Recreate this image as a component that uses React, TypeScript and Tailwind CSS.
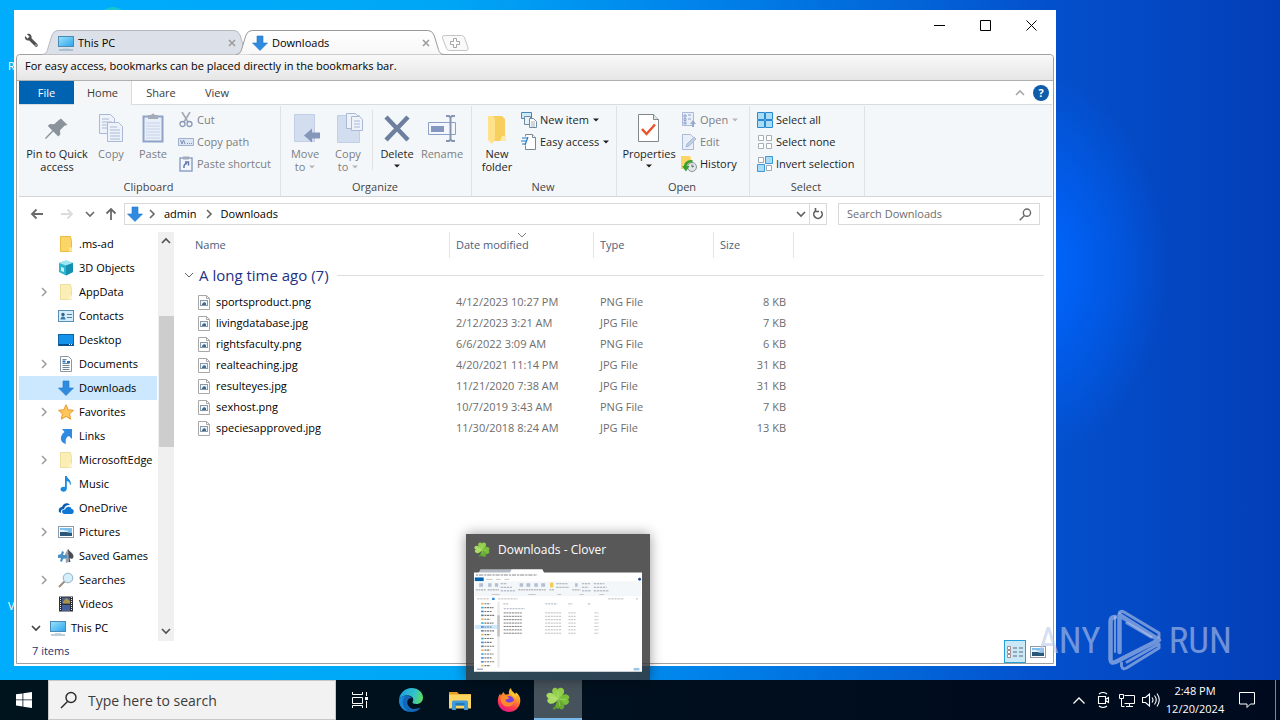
import { useState } from "react"
import type { ReactNode } from "react"
import { clsx } from "clsx"

/* ---------- shared icons ---------- */

function DownArrow({ className }: { className?: string }) {
	return (
		<svg viewBox="0 0 16 16" className={clsx("size-4 shrink-0", className)}>
			<path d="M5 1h6v7h4.5L8 15.5.5 8H5z" fill="#2f8be0" stroke="#1f76c8" strokeWidth=".6" />
		</svg>
	)
}

function Monitor() {
	return (
		<svg viewBox="0 0 16 16" className="size-4 shrink-0">
			<defs>
				<linearGradient id="screen" x1="0" y1="0" x2="1" y2="1">
					<stop offset="0" stopColor="#9be4fb" />
					<stop offset="1" stopColor="#2ba3ec" />
				</linearGradient>
			</defs>
			<rect x=".5" y="1.5" width="15" height="10" fill="url(#screen)" stroke="#4a8ab5" />
			<path d="M1 15h14" stroke="#78a0b4" />
			<path d="M5 13.5h6" stroke="#c4d6df" />
		</svg>
	)
}

function Folder({ pale }: { pale?: boolean }) {
	return (
		<svg viewBox="0 0 16 16" className="size-4 shrink-0">
			<path d="M2.5.5h10l1 5v10h-11z" fill={pale ? "#fbeeb4" : "#fbd667"} stroke={pale ? "#efdf9f" : "#e9bb45"} />
			<path d="M11 11.500h3v4h-3z" fill={pale ? "#fdf4cf" : "#ffe79a"} />
		</svg>
	)
}

function Chevron({ dir, className }: { dir: "up" | "down" | "right"; className?: string }) {
	const d = { up: "M1 7l4-4 4 4", down: "M1 3l4 4 4-4", right: "M3 1l4 4-4 4" }[dir]
	return (
		<svg viewBox="0 0 10 10" className={clsx("size-[10px] shrink-0", className)} fill="none" stroke="currentColor" strokeWidth="1.600">
			<path d={d} />
		</svg>
	)
}

function Caret({ className }: { className?: string }) {
	return (
		<svg viewBox="0 0 6 4" className={clsx("inline-block h-1 w-[6px]", className)}>
			<path d="M0 .5h6L3 3.500z" fill="currentColor" />
		</svg>
	)
}

function Magnifier({ className }: { className?: string }) {
	return (
		<svg viewBox="0 0 18 18" className={className} fill="none" stroke="currentColor">
			<circle cx="11" cy="6.500" r="5" />
			<path d="M7.500 10.500 1 17" />
		</svg>
	)
}

function Picture() {
	return (
		<svg viewBox="0 0 16 16" className="size-4 shrink-0">
			<rect x=".5" y="2.500" width="15" height="11" fill="#fff" stroke="#8f9ba6" />
			<path d="M2 4h12v8H2z" fill="#7dc0ee" />
			<path d="M2 8c4-2 6 1 12 1v3H2z" fill="#2b5878" />
			<path d="M2 6.500c3-2 5 1 8 0v1.500H2z" fill="#e4f3fc" />
		</svg>
	)
}

function Clover({ className }: { className?: string }) {
	return (
		<svg viewBox="0 0 24 24" className={className}>
			<path d="M11.500 12c-.5 4-2 7-5 9.500l2 1.500c3-3 4-6.500 4-11z" fill="#4f9a2c" />
			<path d="M12 12.500C8.500 9.500 5.500 6.500 6.300 3.200 7.100.2 10.600 0 11.800 2.400 13.500-.2 17.900.6 18.100 4 18.200 7.400 14.800 9.800 12 12.500z" fill="#93d04b" />
			<path d="M12.300 12.500C9.500 15.500 6 18 3 16.200.6 14.500 1 12.200 2.600 11.300-.2 10-.4 6.800 2.700 5.900 6.500 5 9.800 9 12.300 12.500z" fill="#a9dd62" />
			<path d="M11.700 12.500c2.800-3.500 5.800-6 9-5 3.100 1 3.200 4 1.300 5.100 2 1.800.7 5.200-2.500 5.300-3.600.100-6-2.900-7.800-5.400z" fill="#79bd3a" />
			<path d="M12 12c3.300 1.800 7 5 6.200 8.300-.8 2.700-4 2.700-4.700.7-2 1.600-4 0-3.700-2.600.300-2.300 1.400-4.700 2.200-6.400z" fill="#66a92f" />
			<path d="M12 12L12 4M12 12L4 10.500M12 12l8 .5M12.500 13l1.500 6" stroke="#c6ea8c" strokeWidth=".7" opacity=".7" />
		</svg>
	)
}

/* ---------- tab strip ---------- */

function Tab({ title, icon, active, onClick }: { title: string; icon: ReactNode; active: boolean; onClick: () => void }) {
	return (
		<div className={clsx("relative h-[25px] w-[208px]", active ? "z-10" : "z-0")}>
			<svg viewBox="0 0 208 25" className="absolute inset-0 size-full" preserveAspectRatio="none">
				<defs>
					<linearGradient id="tabFill" x1="0" y1="0" x2="0" y2="1">
						<stop offset="0" stopColor="#ffffff" />
						<stop offset="1" stopColor="#f7f7f7" />
					</linearGradient>
				</defs>
				<path
					d="M0 24.500C4 24 5 22 6 18L10 5Q12 .5 16 .5H192Q196 .5 198 5L202 18C203 22 204 24 208 24.500"
					fill={active ? "url(#tabFill)" : "#dce0e8"}
					stroke={active ? "#9a9a9a" : "#b4b8bf"}
				/>
			</svg>
			<div className="relative flex h-full items-center pl-4 pr-[13px] pt-px">
				<button onClick={onClick} className="flex min-w-0 flex-1 items-center gap-1 text-left">
					{icon}
					<span>{title}</span>
				</button>
				<button aria-label={`Close ${title}`} className="grid size-[10px] place-items-center text-[#9a9a9a]">
					<svg viewBox="0 0 8 8" className="size-2" stroke="currentColor" strokeWidth="1.500">
						<path d="M1 1l6 6M7 1L1 7" />
					</svg>
				</button>
			</div>
		</div>
	)
}

function TitleBar() {
	const [tab, setTab] = useState("Downloads")
	return (
		<header className="flex h-11 shrink-0 items-start">
			<div className="flex h-full items-end pl-[7px]">
				<button aria-label="Settings" className="mb-[6px] mr-[3px] grid size-4 place-items-center">
					<svg viewBox="0 0 16 16" className="size-[15px]">
						<path d="M6 6l7 7" stroke="#505050" strokeWidth="3.400" strokeLinecap="round" />
						<path d="M3.200 1.200 6 4 4 6 1.200 3.200C.2 6 2.500 8.800 5.800 7.800L8 5.500C8.800 2.500 6 .1 3.200 1.200z" fill="#505050" />
						<circle cx="12.800" cy="12.800" r=".7" fill="#fff" />
					</svg>
				</button>
				<div className="relative z-10 -mb-px flex">
					<Tab title="This PC" icon={<Monitor />} active={tab === "This PC"} onClick={() => setTab("This PC")} />
					<div className="-ml-[14px]">
						<Tab title="Downloads" icon={<DownArrow />} active={tab === "Downloads"} onClick={() => setTab("Downloads")} />
					</div>
				</div>
				<button aria-label="New tab" className="-ml-[3px] mb-[3px] h-4 w-7">
					<svg viewBox="0 0 28 16" fill="#f9f9f9" stroke="#c4c4c4">
						<path d="M4.500.5h16q2 0 3 2l3.500 10q1 3-2 3H8.500q-2 0-3-2L1.500 3q-1-2.500 3-2.500z" />
						<path d="M12.500 3.500h3v3h3v3h-3v3h-3v-3h-3v-3h3z" fill="#fff" stroke="#a5a5a5" />
					</svg>
				</button>
			</div>
			<div className="ml-auto flex text-black">
				{[
					["Minimize", "M0 5.500h11"],
					["Maximize", "M.5.5h10v10H.5z"],
					["Close", "M.5.5l10 10M10.500.5l-10 10"],
				].map(([label, d]) => (
					<button key={label} aria-label={label} className="grid h-[30px] w-[46px] place-items-center">
						<svg viewBox="0 0 11 11" className="size-[11px]" fill="none" stroke="currentColor">
							<path d={d} />
						</svg>
					</button>
				))}
			</div>
		</header>
	)
}

/* ---------- ribbon ---------- */

const bigIcons: Record<string, ReactNode> = {
	pin: <path d="M20 5.500l6.500 6.500-3 .8-4.500 4.500.3 4.200-2 2-5-5-6.800 7-1.500.5.500-1.500 6.800-7-4.500-4.500 2-2 4.300.3 4.500-4z" fill="#8a929b" />,
	copy: (
		<g fill="#eef3fa" stroke="#a9b9d6">
			<path d="M4.500 1.500h11l4 4v15h-15z" />
			<path d="M7 6h7M7 9h10M7 12h10M7 15h10" />
			<path d="M12.500 9.500h11l4 4v15h-15z" />
			<path d="M15 14h7M15 17h10M15 20h10M15 23h10M15 26h10" />
		</g>
	),
	paste: (
		<g>
			<path d="M6.500 3.500h19v25h-19z" fill="#e9eff9" stroke="#8ea3c8" strokeWidth="2" />
			<path d="M11 2h3q2-3 4 0h3v4H11z" fill="#a3abb8" />
			<path d="M9 10h14M9 13h14M9 16h14M9 19h14M9 22h14M9 25h14" stroke="#c4d2ea" />
		</g>
	),
	move: (
		<g>
			<path d="M5.500 1.500h20v27h-20z" fill="#d3ddf0" stroke="#c2cfe8" />
			<path d="M15 22.500l8-7v4h8v6h-8v4z" fill="#8596bb" />
		</g>
	),
	copyTo: (
		<g fill="#eef3fa" stroke="#a9b9d6">
			<path d="M5.500 2.500h22v27h-22z" fill="#d3ddf0" stroke="#c2cfe8" />
			<path d="M14.500.5h9l3 3v12h-12z" />
			<path d="M19.500 3.500h8l3 3v11h-11z" />
			<path d="M22 8h6M22 11h6M22 14h6" />
		</g>
	),
	delete: <path d="M5 4l22 23M27 4L5 27" stroke="#6d7f9f" strokeWidth="4.500" fill="none" />,
	rename: (
		<g fill="none" stroke="#8ba0c6">
			<path d="M2.500 9.500h27v12h-27z" fill="#f3f6fc" />
			<path d="M5 13h13v6H5z" fill="#8397bf" stroke="none" />
			<path d="M20 3h3l1.500 1.500L26 3h3M24.500 4.500v22M20 28h3l1.500-1.500 1.500 1.500h3" strokeWidth="2" stroke="#8796b0" />
		</g>
	),
	folder: (
		<g>
			<path d="M7 3h14l3 3v22H8.500z" fill="#f7cf5e" />
			<path d="M7 3h5l2 3v20l-3 5-4-4z" fill="#ffe28a" />
			<path d="M21 23h4v5h-6z" fill="#ffeaa5" />
		</g>
	),
	properties: (
		<g fill="#fff" stroke="#82878c">
			<path d="M5.500 1.500h15l5 5v22h-20z" />
			<path d="M20.500 1.500v5h5" fill="#dcebe2" />
			<path d="M9 16l4.500 5L22 11.500" fill="none" stroke="#e8532b" strokeWidth="2.500" />
		</g>
	),
}

function BigButton({ icon, label, width, muted, caret }: { icon: string; label: string; width: string; muted?: boolean; caret?: "inline" | "below" }) {
	return (
		<button className={clsx("flex flex-col items-center pt-[7px] text-center leading-[13px]", width, muted ? "text-[#7b7e82]" : "text-[#1e1e1e]")}>
			<svg viewBox="0 0 32 32" className="mb-[2px] size-8">
				{bigIcons[icon]}
			</svg>
			<span className="whitespace-pre">
				{label}
				{caret === "inline" && <Caret className="mb-[2px] ml-1 text-[#b5b8bc]" />}
			</span>
			{caret === "below" && <Caret className="mt-1" />}
		</button>
	)
}

const smallIcons: Record<string, ReactNode> = {
	cut: (
		<g fill="none" stroke="#8a99b5" strokeWidth="1.300">
			<path d="M4 0l6 10M12 0L6 10" stroke="#a3a9b3" strokeWidth="1.600" />
			<circle cx="4.500" cy="12" r="2.500" />
			<circle cx="11.500" cy="12" r="2.500" />
		</g>
	),
	path: (
		<g fill="none" stroke="#9fb0cc">
			<path d="M.5 4.500h15v7H.5z" fill="#dde6f5" />
			<path d="M2.500 6l1.500 4 1.500-4L7 10M9 9.500h1M11 9.500h1M13 9.500h1" stroke="#7f90b0" />
		</g>
	),
	shortcut: (
		<g fill="none">
			<path d="M2 2h12v13H2z" fill="#f3f7fd" stroke="#8ea3c8" strokeWidth="1.500" />
			<path d="M5 .5h6v3H5z" fill="#a3abb8" />
			<path d="M6 12c-.5-3 1-4.500 3-4.500M7 6h3.500v3.500" stroke="#5f78ab" strokeWidth="1.500" />
		</g>
	),
	newItem: (
		<g fill="#fff" stroke="#6f8ba3">
			<path d="M.5.5h10v6H.5z" fill="#cfe8f7" stroke="#4a87b5" />
			<path d="M3.500 4.500h6v8h-6z" fill="#e8f3f9" />
			<path d="M8.500 6.500h4l3 3v6h-7z" />
			<path d="M10 10h4M10 12h4M10 14h4" stroke="#a3aeb8" />
		</g>
	),
	easy: (
		<g fill="#fff" stroke="#7b8791">
			<path d="M4.500 2.500v-2h7l3 3v12h-10v-4" />
			<path d="M11.500.5v3h3" />
			<path d="M1 4h6M0 7h5M1 10h3M7 3L4 11" stroke="#2579c4" strokeWidth="1.200" />
		</g>
	),
	open: (
		<g fill="#e9eff9" stroke="#a9b9d6">
			<path d="M1.500.5h11v13h-11z" />
			<path d="M3 3h2v2H3zM3 6.500h2v2H3zM3 10h2v2H3zM7 3h3M7 7h3" stroke="#8ea3c8" />
			<path d="M7 15h4v-3H9l3-4 3 4h-2v3z" fill="#98a9cb" stroke="none" />
		</g>
	),
	edit: (
		<g fill="#e9eff9" stroke="#a9b9d6">
			<path d="M1.500.5h8l3 3v12h-11z" />
			<path d="M5 13l1-3 7-7 2 2-7 7z" fill="#c0cde6" />
		</g>
	),
	history: (
		<g>
			<path d="M0 0h9l1 2v11H0z" fill="#fbd667" />
			<circle cx="11" cy="11" r="4.500" fill="#e2e6e8" stroke="#8b9297" />
			<path d="M11 8.500V11l2-1" fill="none" stroke="#5d666c" />
			<path d="M4.500 13C3 8 7 4.500 11.500 5.500" fill="none" stroke="#37a033" strokeWidth="2.500" />
			<path d="M1 10l4 5.500L8.500 10z" fill="#37a033" />
		</g>
	),
	all: <path d="M.5.5h7v7h-7zM8.500.5h7v7h-7zM.5 8.500h7v7h-7zM8.500 8.500h7v7h-7z" fill="#a9dcf8" stroke="#2a8ad0" />,
	none: <path d="M1.500 1.500h5v5h-5zM9.500 1.500h5v5h-5zM1.500 9.500h5v5h-5zM9.500 9.500h5v5h-5z" fill="#fff" stroke="#a9aeb3" />,
	invert: (
		<g>
			<path d="M1.500 1.500h5v5h-5zM9.500 9.500h5v5h-5z" fill="#fff" stroke="#9fa8b0" />
			<path d="M8.500.5h7v7h-7zM.5 8.500h7v7h-7z" fill="#a9dcf8" stroke="#3f97d8" />
		</g>
	),
}

function SmallButton({ icon, label, muted, caret }: { icon: string; label: string; muted?: boolean; caret?: boolean }) {
	return (
		<button className={clsx("flex h-[22px] items-center gap-[3px] whitespace-nowrap", muted ? "text-[#7b7e82]" : "text-[#1e1e1e]")}>
			<svg viewBox="0 0 16 16" className="size-4">
				{smallIcons[icon]}
			</svg>
			{label}
			{caret && <Caret className={clsx("ml-px", muted && "text-[#b5b8bc]")} />}
		</button>
	)
}

function Group({ label, width, children }: { label: string; width: string; children: ReactNode }) {
	return (
		<section className={clsx("flex flex-col border-r border-[#e0e3e6]", width)}>
			<div className="flex flex-1">{children}</div>
			<div className="pr-[2px] text-center leading-[18px] text-[#444]">{label}</div>
		</section>
	)
}

function SmallColumn({ children }: { children: ReactNode }) {
	return <div className="flex flex-col items-start pt-[3px]">{children}</div>
}

function Ribbon() {
	return (
		<div>
			<div className="flex h-6 items-stretch border-b border-[#dadbdc] text-[#3b3b3b]">
				<button className="w-[55px] bg-[#0063b1] pt-px text-white">File</button>
				<button className="-mb-px w-[58px] border-r border-[#dadbdc] bg-[#f5f6f7]">Home</button>
				<button className="w-[58px] pt-px">Share</button>
				<button className="w-[54px] pt-px">View</button>
				<button aria-label="Collapse ribbon" className="ml-auto w-6 text-[#a8a8a8]">
					<Chevron dir="up" className="mx-auto" />
				</button>
				<button aria-label="Help" className="ml-px mr-[3px] grid place-items-center">
					<span className="grid size-4 place-items-center rounded-full bg-[#0f5cab] text-[11px] font-bold leading-4 text-white">?</span>
				</button>
			</div>
			<div className="flex h-[92px] border-b border-[#d3d5d7] bg-[#f4f7fa] pt-px">
				<Group label="Clipboard" width="w-[262px]">
					<div className="w-[5px]" />
					<BigButton icon="pin" label={"Pin to Quick\naccess"} width="w-[66px]" />
					<BigButton icon="copy" label="Copy" width="w-[42px]" muted />
					<BigButton icon="paste" label="Paste" width="w-[42px]" muted />
					<div className="w-1" />
					<SmallColumn>
						<SmallButton icon="cut" label="Cut" muted />
						<SmallButton icon="path" label="Copy path" muted />
						<SmallButton icon="shortcut" label="Paste shortcut" muted />
					</SmallColumn>
				</Group>
				<Group label="Organize" width="w-[191px]">
					<div className="w-[2px]" />
					<BigButton icon="move" label={"Move\nto"} width="w-[44px]" muted caret="inline" />
					<BigButton icon="copyTo" label={"Copy\nto"} width="w-[42px]" muted caret="inline" />
					<div className="mx-[3px] mt-1 h-[60px] w-px bg-[#e0e3e6]" />
					<BigButton icon="delete" label="Delete" width="w-[42px]" caret="below" />
					<BigButton icon="rename" label="Rename" width="w-[48px]" muted />
				</Group>
				<Group label="New" width="w-[145px]">
					<div className="w-px" />
					<BigButton icon="folder" label={"New\nfolder"} width="w-[48px]" />
					<SmallColumn>
						<SmallButton icon="newItem" label="New item" caret />
						<SmallButton icon="easy" label="Easy access" caret />
					</SmallColumn>
				</Group>
				<Group label="Open" width="w-[133px]">
					<BigButton icon="properties" label="Properties" width="w-[64px]" caret="below" />
					<SmallColumn>
						<SmallButton icon="open" label="Open" muted caret />
						<SmallButton icon="edit" label="Edit" muted />
						<SmallButton icon="history" label="History" />
					</SmallColumn>
				</Group>
				<Group label="Select" width="w-[115px]">
					<div className="w-[7px]" />
					<SmallColumn>
						<SmallButton icon="all" label="Select all" />
						<SmallButton icon="none" label="Select none" />
						<SmallButton icon="invert" label="Invert selection" />
					</SmallColumn>
				</Group>
			</div>
		</div>
	)
}

/* ---------- address row ---------- */

function Arrow({ d, label, className }: { d: string; label: string; className?: string }) {
	return (
		<button aria-label={label} className={clsx("grid w-6 place-items-center", className)}>
			<svg viewBox="0 0 14 14" className="size-[14px]" fill="none" stroke="currentColor" strokeWidth="1.800">
				<path d={d} />
			</svg>
		</button>
	)
}

function AddressRow() {
	return (
		<div className="flex h-[35px] shrink-0 items-center pb-px pl-[6px] pr-3 text-[#6a6a6a]">
			<Arrow label="Back" d="M13 7H2M6.500 2.500 2 7l4.500 4.500" />
			<Arrow label="Forward" d="M1 7h11M7.500 2.500 12 7l-4.500 4.500" className="ml-[6px] text-[#dcdcdc]" />
			<button aria-label="Recent locations" className="ml-[6px]">
				<Chevron dir="down" className="size-[7px]" />
			</button>
			<Arrow label="Up" d="M7 13V2M2.500 6.500 7 2l4.500 4.500" className="ml-1 mr-px" />
			<nav className="flex h-[22px] flex-1 items-center border border-[#d9d9d9] text-black">
				<DownArrow className="ml-[2px]" />
				<Chevron dir="right" className="ml-1 size-[7px] text-[#666]" />
				<a href="#admin" className="ml-[7px]">
					admin
				</a>
				<Chevron dir="right" className="ml-[7px] size-[7px] text-[#666]" />
				<a href="#downloads" className="ml-[7px]">
					Downloads
				</a>
				<button aria-label="Previous locations" className="ml-auto mr-[3px] text-[#5e5e5e]">
					<Chevron dir="down" />
				</button>
				<button aria-label="Refresh" className="grid h-full w-[17px] place-items-center border-l border-[#d9d9d9] text-[#5e5e5e]">
					<svg viewBox="0 0 12 12" className="size-3" fill="none" stroke="currentColor" strokeWidth="1.600">
						<path d="M3 3.200A4.200 4.200 0 1 0 9 3.200M3.500 0v3.500H7" />
					</svg>
				</button>
			</nav>
			<label className="ml-[11px] flex h-[22px] w-[202px] items-center border border-[#d9d9d9] pl-2 pr-[7px]">
				<input aria-label="Search Downloads" placeholder="Search Downloads" className="min-w-0 flex-1 outline-none placeholder:text-[#6d6d6d]" />
				<Magnifier className="size-[13px] stroke-[2]" />
			</label>
		</div>
	)
}

/* ---------- navigation pane ---------- */

const navIcons: Record<string, ReactNode> = {
	cube: (
		<g>
			<path d="M8 .5l7 2.500v9L8 15.500 1 12V3z" fill="#2eb5cf" />
			<path d="M8 .5l7 2.500-7 2.500L1 3z" fill="#9fe6f2" />
			<path d="M8 5.500L15 3v9l-7 3.500z" fill="#1590b2" />
			<path d="M3 7l3 1v4l-3-1z" fill="#c6f3f9" />
		</g>
	),
	contacts: (
		<g>
			<rect x=".5" y="2.500" width="15" height="11" fill="#d5ecfa" stroke="#5a8fb5" />
			<circle cx="5" cy="6.500" r="1.700" fill="#33658a" />
			<path d="M2.500 11.500c0-4 5-4 5 0z" fill="#3a7aa8" />
			<path d="M9 6.500h5M9 9.500h5" stroke="#4985ad" />
		</g>
	),
	desktop: (
		<g>
			<rect x=".5" y="2.500" width="15" height="11" fill="#1593ea" stroke="#0b63a8" />
			<path d="M1 12h14v1.500H1z" fill="#084a84" />
			<path d="M11 12.500h1M13 12.500h1" stroke="#fff" />
		</g>
	),
	document: (
		<g>
			<path d="M2.500.5h8l3 3v12h-11z" fill="#fff" stroke="#8b98a3" />
			<path d="M4.500 3.500h4M4.500 7.500h7M4.500 9.500h7M4.500 11.500h7M4.500 13.500h7" stroke="#6d8799" />
			<path d="M4.500 5.500h3M9 6h3" stroke="#2579c4" strokeWidth="2" />
		</g>
	),
	star: <path d="M8 .8l2.200 5 5.300.5-4 3.600 1.200 5.300L8 12.400l-4.700 2.800 1.200-5.300-4-3.600 5.300-.5z" fill="#ffc65c" stroke="#e59a2d" />,
	link: <path d="M4 1h10v10l-3-3c-3 1-4 4-3 8C2 15 1 8 6.500 4z" fill="#2f8be0" />,
	music: <path d="M7 0h1.800c.5 3 4.500 3.500 4 8-.3 1.200-1 1.200-1 0 0-1.800-1.300-2.500-3-3v7.500C8.800 17 2 16.500 2.500 13 3 10.800 5.500 10.300 7 11z" fill="#1b8be0" />,
	cloud: (
		<g>
			<path d="M1 12c-1-3 1-5 3-5 1-4 6-5 8-2-3-.5-5 1-6 4-2 0-3.500 1-3 4z" fill="#0a5fb4" />
			<path d="M6 14c-3-1-2.500-5 1-4.500C8 6 13 6 13.500 9c3 .3 3 4.500 0 5z" fill="#0f78d4" />
		</g>
	),
	games: (
		<g>
			<path d="M10 1c2 3 5 4 5.500 7 0 3-2.500 3.500-4 2l1 4H8z" fill="#4a4d55" />
			<path d="M10 1L7 6l1 9 3-1z" fill="#9aa3ae" />
			<path d="M0 7l3-1 1-3 2 1-1 3h4v3L5 11l-1 3-2-1 1-3H0z" fill="#4b90c4" />
		</g>
	),
	search: (
		<g fill="none">
			<path d="M7 9l-6 6" stroke="#9a8f86" strokeWidth="2" />
			<circle cx="10" cy="6" r="4.800" fill="#d6edfa" stroke="#8fb3cb" />
		</g>
	),
	video: (
		<g>
			<path d="M1 .5h14v15H1z" fill="#2c2f36" />
			<path d="M4 1.500h8v6H4z" fill="#4e5f8c" />
			<path d="M4 9h8v6H4z" fill="#44609a" />
			<path d="M5 6l3-4 4 3v2.500H5z" fill="#a9944c" />
			<path d="M2.500 1v14M13.500 1v14" stroke="#e8e8e8" strokeDasharray="1 1" />
		</g>
	),
}

const navItems: { label: string; icon: string; expandable?: boolean; selected?: boolean }[] = [
	{ label: ".ms-ad", icon: "folder" },
	{ label: "3D Objects", icon: "cube" },
	{ label: "AppData", icon: "pale", expandable: true },
	{ label: "Contacts", icon: "contacts" },
	{ label: "Desktop", icon: "desktop" },
	{ label: "Documents", icon: "document", expandable: true },
	{ label: "Downloads", icon: "down", selected: true },
	{ label: "Favorites", icon: "star", expandable: true },
	{ label: "Links", icon: "link" },
	{ label: "MicrosoftEdge", icon: "pale", expandable: true },
	{ label: "Music", icon: "music" },
	{ label: "OneDrive", icon: "cloud" },
	{ label: "Pictures", icon: "picture", expandable: true },
	{ label: "Saved Games", icon: "games" },
	{ label: "Searches", icon: "search", expandable: true },
	{ label: "Videos", icon: "video" },
]

function NavIcon({ name }: { name: string }) {
	if (name === "folder" || name === "pale") return <Folder pale={name === "pale"} />
	if (name === "down") return <DownArrow />
	if (name === "picture") return <Picture />
	return (
		<svg viewBox="0 0 16 16" className="size-4 shrink-0">
			{navIcons[name]}
		</svg>
	)
}

function NavPane() {
	return (
		<aside className="flex w-[155px] shrink-0">
			<ul className="min-w-0 flex-1 overflow-hidden text-black">
				{navItems.map((item) => (
					<li key={item.label} className={clsx("flex h-6 items-center pl-5", item.selected && "mr-px bg-[#cce8ff]")}>
						<span className="w-[19px] text-[#a0a0a0]">{item.expandable && <Chevron dir="right" />}</span>
						<a href={`#${item.label}`} className="flex items-center gap-[5px] whitespace-nowrap">
							<NavIcon name={item.icon} />
							{item.label}
						</a>
					</li>
				))}
				<li className="flex h-6 items-center pl-3">
					<span className="w-[19px] text-[#404040]">
						<Chevron dir="down" />
					</span>
					<a href="#this-pc" className="flex items-center gap-[5px]">
						<Monitor />
						This PC
					</a>
				</li>
			</ul>
			<div className="flex w-4 flex-col items-center bg-[#f0f0f0] text-[#505050]">
				<button aria-label="Scroll up" className="grid h-[17px] place-items-center">
					<Chevron dir="up" className="size-[9px]" />
				</button>
				<div className="mt-[67px] h-[131px] w-[15px] bg-[#cdcdcd]" />
				<button aria-label="Scroll down" className="mt-auto grid h-5 place-items-center">
					<Chevron dir="down" className="size-[9px]" />
				</button>
			</div>
		</aside>
	)
}

/* ---------- file list ---------- */

const files = [
	["sportsproduct.png", "4/12/2023 10:27 PM", "PNG File", "8 KB"],
	["livingdatabase.jpg", "2/12/2023 3:21 AM", "JPG File", "7 KB"],
	["rightsfaculty.png", "6/6/2022 3:09 AM", "PNG File", "6 KB"],
	["realteaching.jpg", "4/20/2021 11:14 PM", "JPG File", "31 KB"],
	["resulteyes.jpg", "11/21/2020 7:38 AM", "JPG File", "31 KB"],
	["sexhost.png", "10/7/2019 3:43 AM", "PNG File", "7 KB"],
	["speciesapproved.jpg", "11/30/2018 8:24 AM", "JPG File", "13 KB"],
]

function FileIcon() {
	return (
		<svg viewBox="0 0 12 15" className="h-[15px] w-3 shrink-0">
			<path d="M.5.5h8l3 3v11H.5z" fill="#fff" stroke="#a8a8a8" />
			<path d="M8.500.5v3h3" fill="none" stroke="#a8a8a8" />
			<rect x="2.500" y="5.500" width="7" height="5" fill="#eef6fc" stroke="#8a9aa8" />
			<path d="M4 9l2-2 2 1v2H4z" fill="#3f6a92" />
		</svg>
	)
}

function FileList() {
	return (
		<div className="min-w-0 flex-1 pr-2">
			<table className="w-full table-fixed border-separate border-spacing-0 text-left">
				<colgroup>
					<col className="w-[276px]" />
					<col className="w-[144px]" />
					<col className="w-[120px]" />
					<col className="w-[80px]" />
					<col />
				</colgroup>
				<thead>
					<tr className="h-[26px] text-[#4c607a]">
						<th className="border-r border-[#e5e5e5] pl-[21px] font-normal">Name</th>
						<th className="relative border-r border-[#e5e5e5] pl-[6px] font-normal">
							Date modified
							<Chevron dir="down" className="absolute inset-x-0 -top-[2px] mx-auto size-[9px] stroke-1 text-[#808080]" />
						</th>
						<th className="border-r border-[#e5e5e5] pl-[6px] font-normal">Type</th>
						<th className="border-r border-[#e5e5e5] pl-[6px] font-normal">Size</th>
						<th />
					</tr>
				</thead>
				<tbody>
					<tr className="h-[34px]">
						<th colSpan={5} className="pl-[10px] font-normal">
							<div className="flex items-center text-[15px] leading-5 text-[#1e3287]">
								<Chevron dir="down" className="mr-[5px] stroke-1 text-[#606060]" />
								A long time ago (7)
								<span className="ml-2 h-px flex-1 bg-[#dedede]" />
							</div>
						</th>
					</tr>
					{files.map(([name, date, type, size]) => (
						<tr key={name} className="h-[21px] text-[#6d6d6d]">
							<td className="pl-6 text-black">
								<span className="flex items-center gap-[6px]">
									<FileIcon />
									{name}
								</span>
							</td>
							<td className="pl-[6px]">{date}</td>
							<td className="pl-[6px]">{type}</td>
							<td className="pr-2 text-right">{size}</td>
							<td />
						</tr>
					))}
				</tbody>
			</table>
		</div>
	)
}

function StatusBar() {
	return (
		<footer className="-mt-px flex h-[23px] shrink-0 items-center pl-[13px] pr-[6px] text-[#1e3270]">
			7 items
			<button aria-label="Details view" className="ml-auto grid h-[23px] w-[22px] place-items-center border border-[#26a0da] bg-[#cbe8f6]">
				<svg viewBox="0 0 18 14" className="h-[14px] w-[18px]" fill="none" stroke="#5b6b78">
					<path d="M1.500 1.500h3v3h-3zM1.500 5.500h3v3h-3zM1.500 9.500h3v3h-3z" stroke="#a88a8a" fill="#fff" />
					<path d="M7 3h4M13 3h4M7 7h4M13 7h4M7 11h4M13 11h4" />
				</svg>
			</button>
			<button aria-label="Large icons view" className="ml-1">
				<Picture />
			</button>
		</footer>
	)
}

function ExplorerWindow() {
	return (
		<div className="relative flex flex-1 flex-col bg-white px-[2px] pb-[2px] text-black">
			<TitleBar />
			<div className="flex flex-1 flex-col rounded-t-[4px] border border-[#a0a0a0]">
				<div className="flex h-[26px] shrink-0 items-center rounded-t-[4px] border-b border-[#b0b0b0] bg-linear-to-b from-[#f9f9f9] to-[#e6e6e6] px-2 pb-[2px]">
					For easy access, bookmarks can be placed directly in the bookmarks bar.
				</div>
				<div className="flex flex-1 flex-col pl-[2px] pr-[1px]">
					<Ribbon />
					<AddressRow />
					<div className="flex flex-1">
						<NavPane />
						<FileList />
					</div>
					<StatusBar />
				</div>
			</div>
		</div>
	)
}

/* ---------- taskbar ---------- */

function PreviewThumb() {
	const rows = Array.from({ length: 7 }, (_, i) => 291 + i * 21)
	const side = Array.from({ length: 17 }, (_, i) => 234 + i * 24)
	return (
		<svg viewBox="0 0 1042 656" className="w-full">
			<path d="M28 44l12-24h195l12 24z" fill="#b5bac2" />
			<path d="M222 44l12-24h190l12 24z" fill="#fff" />
			<path d="M0 40h1042v616H0z" fill="#fff" />
			<path d="M12 56h380" stroke="#888" strokeWidth="7" strokeDasharray="14 5 26 6" />
			<path d="M5 71h55v24H5z" fill="#0063b1" />
			<circle cx="1027" cy="82" r="9" fill="#24508c" />
			<path d="M5 95h1032v92H5z" fill="#f4f7fa" />
			<path d="M75 83h40M135 83h30M190 83h28" stroke="#bbb" strokeWidth="5" />
			<path d="M32 118h24M88 118h20M130 118h20M283 118h22M325 118h24M374 118h22M417 118h24M627 118h16" stroke="#b3bfd3" strokeWidth="22" />
			<path d="M472 118h20" stroke="#f4cc4c" strokeWidth="30" />
			<path d="M12 148h60M85 148h70M275 148h170M468 148h30M610 148h50" stroke="#999" strokeWidth="6" strokeDasharray="12 4" />
			<path d="M165 110h40M165 132h70M165 154h90M510 110h70M510 132h80M670 110h50M670 132h40M670 154h55M743 110h66M743 132h80M743 154h95" stroke="#a0a9b5" strokeWidth="6" strokeDasharray="15 4" />
			<path d="M110 177h50M337 177h46M517 177h24M655 177h26M777 177h30" stroke="#bbb" strokeWidth="5" />
			<path d="M112 204h16" stroke="#2f8be0" strokeWidth="14" />
			<path d="M20 204h76M150 204h120M833 204h98M1005 204h12" stroke="#aaa" strokeWidth="5" strokeDasharray="14 5" />
			<path d="M5 366h138v24H5z" fill="#cce8ff" />
			<path d="M144 222h16v408h-16z" fill="#ececec" />
			<path d="M144 306h16v131h-16z" fill="#c4c4c4" />
			{side.map((y, i) => (
				<g key={y} strokeWidth="7">
					<path d={`M44 ${y}h16`} stroke={["#e6bb4e", "#2eb5cf", "#2f8be0", "#5a7fa5"][i % 4]} strokeWidth="10" />
					<path d={`M65 ${y}h${[36, 56, 46, 62][i % 4]}`} stroke="#777" strokeDasharray="12 4" />
				</g>
			))}
			<path d="M181 235h32M442 235h75M586 235h24M706 235h20M185 265h130" stroke="#a5b0c2" strokeWidth="6" strokeDasharray="13 5" />
			{rows.map((y) => (
				<g key={y} stroke="#bbb" strokeWidth="6" strokeDasharray="13 4">
					<path d={`M184 ${y}h112`} stroke="#777" />
					<path d={`M442 ${y}h100M586 ${y}h44M748 ${y}h24`} />
				</g>
			))}
			<path d="M990 640h36" stroke="#9cc8e6" strokeWidth="16" />
			<path d="M18 640h38" stroke="#8a98b8" strokeWidth="7" />
		</svg>
	)
}

function TaskPreview() {
	return (
		<div className="absolute bottom-full left-0 -ml-[68px] flex h-[146px] w-[184px] flex-col bg-[#363636]/83 px-2 pb-2 shadow-[0_0_12px_rgba(0,0,0,0.4)]">
			<div className="flex h-8 items-center gap-2 text-[12px] text-white">
				<Clover className="size-4" />
				Downloads - Clover
			</div>
			<div className="mt-auto">
				<PreviewThumb />
			</div>
		</div>
	)
}

function TaskButton({ label, active, children }: { label: string; active?: boolean; children: ReactNode }) {
	return (
		<button aria-label={label} className={clsx("grid h-10 w-12 place-items-center", active && "border-b-2 border-[#76b9ed] bg-[#47535c]")}>
			{children}
		</button>
	)
}

function EdgeLogo() {
	return (
		<svg viewBox="0 0 24 24" className="size-6">
			<defs>
				<linearGradient id="edgeTop" x1="0" y1=".4" x2="1" y2=".6">
					<stop offset="0" stopColor="#1a9fe4" />
					<stop offset=".6" stopColor="#33c2c8" />
					<stop offset="1" stopColor="#5bdc60" />
				</linearGradient>
			</defs>
			<path d="M0 12C.5 5 6 0 12.500 0 19.500 0 24 4.500 24 9.500c0 4-3 6.500-6.500 6.500-3 0-4.300-1-4-2 1.500-2 1.200-6-4.500-6.500C5 7.300 1 9 0 12z" fill="url(#edgeTop)" />
			<path d="M0 12c1-3.500 5-5 8.500-4.500 2.500.3 4 1.500 4.500 3-3-1-5.500 2-4.500 5.500 1.200 4 6 6 10 4.500 1.500-.5 2.500-1 3-.7-2 3-5.500 4.200-9 4.200C5 24 0 18.500 0 12z" fill="#1267b8" />
			<path d="M0 12c1-3.500 4-4 6-3.300C2 12 3.500 21 10 23.800 4 23 0 18 0 12z" fill="#1b86d8" />
		</svg>
	)
}

function FolderLogo() {
	return (
		<svg viewBox="0 0 24 24" className="size-6">
			<path d="M1 4h8l2 2h12v5H1z" fill="#e79f20" />
			<path d="M1 6.500h22v14H1z" fill="#fdd563" />
			<path d="M4 22v-8q0-1.500 1.500-1.500h13q1.500 0 1.500 1.500v8h-4v-4.500H8V22z" fill="#3d9bdc" />
			<path d="M7.500 15h9v2.500h-9z" fill="#2578b5" />
		</svg>
	)
}

function FirefoxLogo() {
	return (
		<svg viewBox="0 0 24 24" className="size-6">
			<defs>
				<linearGradient id="fox" x1=".8" y1="0" x2=".3" y2="1">
					<stop offset="0" stopColor="#fff04a" />
					<stop offset=".35" stopColor="#ff9a24" />
					<stop offset=".7" stopColor="#ff3f4e" />
					<stop offset="1" stopColor="#e11586" />
				</linearGradient>
			</defs>
			<path d="M14 0c0 3 3 4 4 6l1-1.500c3 2 4.500 5 4.300 8.500C23 19.500 18 24 12 24 5.500 24 .5 19 .8 12.500 1 9 2 7 3.200 5.500l.5 2L6.500 4 8 6.500c2 0 3 0 4-.5-.500-3 .5-5 2-6z" fill="url(#fox)" />
			<circle cx="12" cy="13" r="5" fill="#7a3fe0" />
			<path d="M3.500 9c3-3 6-1 8 0 1.500 1-1 2.500-3 2.500 0 2 2 3.500 4.500 3 2-.4 3-2 4.500-1.500-1 4-4 6-7.500 5.500-4-.5-7-4-6.500-9.500z" fill="#ff8a2c" />
			<path d="M13 5c3 0 7 3 6.500 8-.3-3-2-4.500-4-5.500z" fill="#ffd23a" />
		</svg>
	)
}

function Taskbar() {
	return (
		<footer className="relative flex h-10 shrink-0 bg-linear-to-r from-[#00141e] to-[#000a1e] text-white">
			<button aria-label="Start" className="grid w-12 place-items-center">
				<svg viewBox="0 0 16 16" className="size-4" fill="#fff">
					<path d="M0 2.300 6.500 1.400v6.100H0zM7.300 1.300 16 0v7.500H7.300zM0 8.300h6.500v6.200L0 13.600zM7.300 8.300H16V16l-8.700-1.300z" />
				</svg>
			</button>
			<label className="flex w-72 items-center gap-[10px] border border-[#c8c8c8] bg-[#f2f2f2] pl-[11px] text-[#2b2b2b]">
				<Magnifier className="size-[18px] stroke-[1.4]" />
				<input aria-label="Type here to search" placeholder="Type here to search" className="min-w-0 flex-1 text-[14px] outline-none placeholder:text-[#3c3c3c]" />
			</label>
			<TaskButton label="Task View">
				<svg viewBox="0 0 18 16" className="h-4 w-[18px]" fill="none" stroke="#fff">
					<path d="M1.500 0v2.500h10V0M1.500 5.500h10v6h-10zM1.500 16v-2.500h10V16M15.500 0v4M15.500 9v7" />
					<path d="M14 5h3v3h-3z" fill="#fff" stroke="none" />
				</svg>
			</TaskButton>
			<div className="ml-[3px] flex gap-px">
				<TaskButton label="Microsoft Edge">
					<EdgeLogo />
				</TaskButton>
				<TaskButton label="File Explorer">
					<FolderLogo />
				</TaskButton>
				<TaskButton label="Firefox">
					<FirefoxLogo />
				</TaskButton>
				<div className="relative">
					<TaskButton label="Clover" active>
						<Clover className="size-6" />
					</TaskButton>
					<TaskPreview />
				</div>
			</div>
			<div className="ml-auto flex items-center">
				<button aria-label="Show hidden icons" className="grid size-6 place-items-center">
					<svg viewBox="0 0 12 7" className="h-[7px] w-3" fill="none" stroke="#fff" strokeWidth="1.300">
						<path d="M.5 6.500 6 1l5.500 5.500" />
					</svg>
				</button>
				<button aria-label="Meet now" className="grid size-6 place-items-center">
					<svg viewBox="0 0 16 16" className="size-4" fill="none" stroke="#fff" strokeWidth="1.100">
						<path d="M4 2q4-3 8 0M4 14q4 3 8 0M3.500 4.500h7v7h-7zM10.500 7.500l3-2v5l-3-2" />
					</svg>
				</button>
				<button aria-label="Network" className="grid size-6 place-items-center">
					<svg viewBox="0 0 16 16" className="size-4" fill="none" stroke="#fff">
						<path d="M5.500 3.500h10v8h-10M10.500 11.500v3M7 14.500h7M.5 2.500h4v4h-4zM2.500 6.500v8h3" />
					</svg>
				</button>
				<button aria-label="Volume" className="grid size-6 place-items-center">
					<svg viewBox="0 0 18 16" className="h-4 w-[18px]" fill="none" stroke="#fff" strokeWidth="1.100">
						<path d="M.5 5.500h3L7.500 2v12L3.500 10.500h-3zM10 5.500q2 2.500 0 5M12.500 3.500q3.500 4.500 0 9M15 1.500q4.500 6.500 0 13" />
					</svg>
				</button>
				<button className="w-16 text-center leading-[18px]">
					2:48 PM
					<br />
					12/20/2024
				</button>
				<button aria-label="Notifications" className="grid w-10 place-items-center">
					<svg viewBox="0 0 16 16" className="size-4" fill="none" stroke="#fff">
						<path d="M.5.5h15v11.500h-4L8 15.500V12H.5z" />
					</svg>
				</button>
				<div className="ml-2 h-full w-[5px] border-l border-[#7c8794]" />
			</div>
		</footer>
	)
}

/* ---------- desktop ---------- */

function Watermark() {
	return (
		<div className="pointer-events-none absolute bottom-[9px] right-12 flex items-center gap-[6px] font-['Roboto_Condensed','Liberation_Sans_Narrow','Open_Sans_Condensed','Open_Sans',sans-serif] text-[37px] leading-none text-[#b9c8ea]/60">
			ANY
			<svg viewBox="0 0 56 62" className="h-[62px] w-14" fill="none" stroke="currentColor" strokeLinejoin="round" strokeLinecap="round">
				<path d="M8 8Q3.500 8 3.500 13v37q0 5 5 3L52 31 12.500 6v37" strokeWidth="4.500" />
				<path d="M12.500 3.500Q14 1.500 17 3l35 21v4M20 14l24 14M14.500 54v3q1 4 5 2L52 39v-4L20 53" strokeWidth="3" />
				<path d="M8 8v35" strokeWidth="2" />
			</svg>
			RUN
		</div>
	)
}

export default function App() {
	return (
		<div className="flex h-screen flex-col overflow-hidden bg-[radial-gradient(ellipse_130px_190px_at_81%_37%,#0068ff_0%,rgba(0,98,248,0.8)_35%,rgba(0,80,215,0)_100%),linear-gradient(90deg,#00adfd_0%,#00a6f6_35%,#0082ea_55%,#0450cc_82%,#033eb8_100%)] font-['Open_Sans','Noto_Sans',sans-serif] text-[11px]">
			<main className="relative flex flex-1 pb-[14px] pl-[14px] pr-56 pt-[10px]">
				<span className="absolute left-2 top-[58px] text-white">R</span>
				<span className="absolute left-2 top-[598px] text-white">V</span>
				<svg viewBox="0 0 30 30" className="absolute left-[98px] top-[6px] size-[30px]" fill="#18c4d0">
					<circle cx="15" cy="15" r="14" />
				</svg>
				<ExplorerWindow />
				<Watermark />
			</main>
			<Taskbar />
		</div>
	)
}
